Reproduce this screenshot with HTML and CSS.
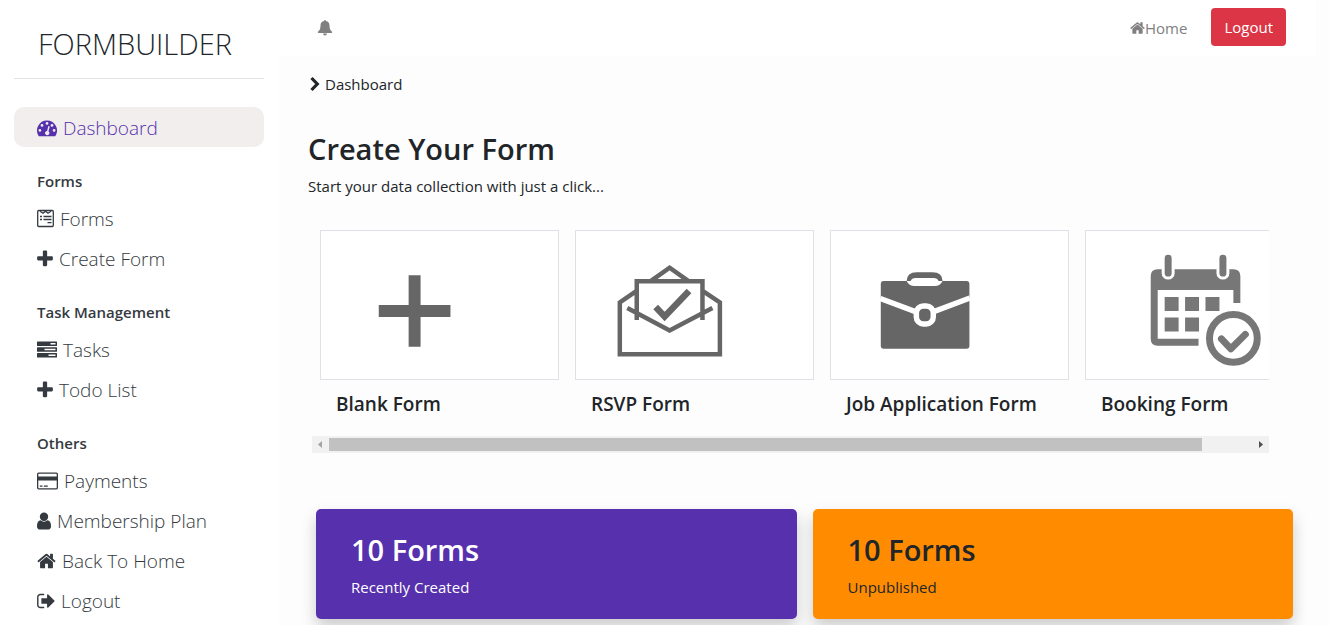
FILE: index.html
```html
<!DOCTYPE html>
<html lang="en">
<head>
<meta charset="utf-8">
<title>Formbuilder - Dashboard</title>
<link rel="stylesheet" href="styles.css">
</head>
<body>
<svg class="defs" aria-hidden="true">
  <symbol id="plus" viewBox="192 0 1408 1792"><path d="M1600 736v192q0 40-28 68t-68 28h-416v416q0 40-28 68t-68 28h-192q-40 0-68-28t-28-68v-416h-416q-40 0-68-28t-28-68v-192q0-40 28-68t68-28h416v-416q0-40 28-68t68-28h192q40 0 68 28t28 68v416h416q40 0 68 28t28 68z"/></symbol>
  <symbol id="home" viewBox="64 0 1664 1792"><path d="M1472 992v480q0 26-19 45t-45 19h-384v-384h-256v384h-384q-26 0-45-19t-19-45v-480q0-1 .5-3t.5-3l575-474 575 474q1 2 1 6zm223-69l-62 74q-8 9-21 11h-3q-13 0-21-7l-692-577-692 577q-12 8-24 7-13-2-21-11l-62-74q-8-10-7-23.500t11-21.500l719-599q32-26 76-26t76 26l244 204v-195q0-14 9-23t23-9h192q14 0 23 9t9 23v408l219 182q10 8 11 21.500t-7 23.500z"/></symbol>
</svg>
<div class="layout">
  <aside class="sidebar">
    <div class="brand">FORMBUILDER</div>
    <nav class="menu" aria-label="Main">
      <a class="item active" href="#">
        <svg class="icon w20" viewBox="0 0 20 20"><path fill-rule="evenodd" d="M10 2.500a10 10 0 0 1 8.400 15.400q-.3.400-.8.400H2.400q-.5 0-.8-.4A10 10 0 0 1 10 2.500zM2.900 11a1.400 1.400 0 1 0 0 2.800 1.400 1.400 0 0 0 0-2.800zM5 6a1.400 1.400 0 1 0 0 2.800A1.400 1.400 0 0 0 5 6zM10 4a1.400 1.400 0 1 0 0 2.800A1.400 1.400 0 0 0 10 4zM15 6a1.400 1.400 0 1 0 0 2.800A1.400 1.400 0 0 0 15 6zM17.100 11a1.400 1.400 0 1 0 0 2.800 1.400 1.400 0 0 0 0-2.800zM11.300 8.300l-1.200 4.600a2.200 2.200 0 1 0 1.400.4l1.200-4.700q-.6-1.100-1.400-.3z"/></svg>Dashboard</a>
      <h2 class="group">Forms</h2>
      <a class="item" href="#">
        <svg class="icon w17" viewBox="0 0 17 20"><g fill="none" stroke="currentColor" stroke-width="1.300"><rect x=".7" y="1.500" width="15.600" height="16" rx="1"/><path d="M3 2.200l3 2 2.500-2 2.500 2 3-2M3 7.500h2M6.500 7.500h8M3 10.500h2M6.500 10.500h8M10.500 13.700h4"/></g></svg>Forms</a>
      <a class="item" href="#"><svg class="icon w16"><use href="#plus"/></svg>Create Form</a>
      <h2 class="group">Task Management</h2>
      <a class="item" href="#">
        <svg class="icon w20" viewBox="0 0 20 20"><path fill-rule="evenodd" d="M.5 1.500h19q.5 0 .5.500v3.500q0 .5-.5.500H.5Q0 6 0 5.500V2q0-.5.500-.5zM13.500 3v1.500h5V3zM.5 7.200h19q.5 0 .5.500v3.500q0 .5-.5.500H.5q-.5 0-.5-.5V7.700q0-.5.500-.5zM7.500 8.700v1.500h11V8.700zM.5 13h19q.5 0 .5.500V17q0 .5-.5.500H.5Q0 17.500 0 17v-3.500q0-.5.500-.5zM11.500 14.500V16h7v-1.500z"/></svg>Tasks</a>
      <a class="item" href="#"><svg class="icon w16"><use href="#plus"/></svg>Todo List</a>
      <h2 class="group">Others</h2>
      <a class="item" href="#">
        <svg class="icon w21" viewBox="0 0 21 20"><path fill-rule="evenodd" d="M1.800 1.500h17.600a1.700 1.700 0 0 1 1.600 1.700v13.600a1.700 1.700 0 0 1-1.600 1.700H1.800A1.700 1.700 0 0 1 0 16.800V3.200a1.700 1.700 0 0 1 1.800-1.700zM1.300 3.300V5.500h18.400V3.300q0-.6-.6-.6H1.900q-.6 0-.6.600zM1.300 9.500v7.200q0 .6.600.6h17.200q.6 0 .6-.6V9.500zM2.800 14.500h2.700v1.300H2.800zM6.800 14.500h4v1.300h-4z"/></svg>Payments</a>
      <a class="item" href="#"><svg class="icon w14" viewBox="256 0 1280 1792"><path d="M1536 1399q0 109-62.500 187t-150.500 78h-854q-88 0-150.500-78t-62.500-187q0-85 8.500-160.500t31.500-152 58.500-131 94-89 134.500-34.500q131 128 313 128t313-128q76 0 134.500 34.500t94 89 58.500 131 31.500 152 8.500 160.500zm-256-887q0 159-112.500 271.500t-271.500 112.500-271.500-112.500-112.500-271.500 112.500-271.500 271.500-112.500 271.500 112.500 112.500 271.500z"/></svg>Membership Plan</a>
      <a class="item" href="#"><svg class="icon w19"><use href="#home"/></svg>Back To Home</a>
      <a class="item" href="#"><svg class="icon w18" viewBox="64 0 1600 1792"><path d="M704 1440q0 4 1 20t.5 26.500-3 23.500-10 19.500-20.500 6.500h-320q-119 0-203.500-84.500t-84.500-203.500v-704q0-119 84.500-203.500t203.500-84.500h320q13 0 22.500 9.500t9.500 22.500q0 4 1 20t.5 26.500-3 23.500-10 19.500-20.500 6.500h-320q-66 0-113 47t-47 113v704q0 66 47 113t113 47h312l11.500 1 11.500 3 8 5.500 7 9 2 13.500zm928-544q0 26-19 45l-544 544q-19 19-45 19t-45-19-19-45v-288h-448q-26 0-45-19t-19-45v-384q0-26 19-45t45-19h448v-288q0-26 19-45t45-19 45 19l544 544q19 19 19 45z"/></svg>Logout</a>
    </nav>
  </aside>

  <div class="main">
    <header class="topbar">
      <button class="bell" type="button" aria-label="Notifications">
        <svg viewBox="0 0 16 16"><path d="M8 0q.9 0 .9 1 3.600.6 3.600 4.600 0 4.600 2.800 6.400 0 1-1 1H1.700q-1 0-1-1 2.800-1.800 2.800-6.400Q3.500 1.600 7.100 1 7.100 0 8 0zM6 13.500h4a2 2 0 0 1-4 0z"/></svg>
      </button>
      <div class="account">
        <a class="homelink" href="#"><svg class="small-icon"><use href="#home"/></svg>Home</a>
        <button class="logout" type="button">Logout</button>
      </div>
    </header>

    <main class="content">
      <div class="crumb"><svg viewBox="0 0 12 16"><path d="M3.500 2L9.300 8l-5.800 6" fill="none" stroke="currentColor" stroke-width="3.200"/></svg>Dashboard</div>
      <h1 class="title">Create Your Form</h1>
      <p class="lead">Start your data collection with just a click...</p>

      <section class="templates">
        <div class="scroller">
          <a class="template" href="#">
            <div class="thumb"><svg viewBox="0 0 238 148"><path fill="#666" d="M88 44h12v30h30v12h-30v30H88V86H58V74h30z"/></svg></div>
            <h3>Blank Form</h3>
          </a>
          <a class="template" href="#">
            <div class="thumb"><svg viewBox="0 0 238 148"><g fill="none" stroke="#666" stroke-width="4.500"><path d="M75 50L94 36.500 113 50M61 89V50.200h66V89M60.500 60L44 71.500V123.500H144.500V71.500L127.500 60M51.500 77L94 99.500 137 77"/><path stroke-width="6.500" d="M80 76l9 9.500L113.500 60"/></g></svg></div>
            <h3>RSVP Form</h3>
          </a>
          <a class="template" href="#">
            <div class="thumb"><svg viewBox="0 0 238 148"><path fill="#666" d="M53 50h83q3 0 3 3v62q0 3-3 3H53q-3 0-3-3V53q0-3 3-3z"/><path fill="#fff" d="M76 50h36q-2 5-8 5H84q-6 0-8-5z"/><path fill="#666" d="M76 50q0-9 10-9h16q10 0 10 9h-4q-1-3-5-3H85q-4 0-5 3z"/><path d="M49.500 67.500L94 84l45.500-17" fill="none" stroke="#fff" stroke-width="5.500"/><rect x="85.700" y="75" width="17" height="18" rx="7" fill="#666" stroke="#fff" stroke-width="5.500"/></svg></div>
            <h3>Job Application Form</h3>
          </a>
          <a class="template" href="#">
            <div class="thumb"><svg viewBox="0 0 238 148"><g fill="#777"><path fill-rule="evenodd" d="M72 38h76q7 0 7 7v27h-7V59H72v49h41v7H72q-7 0-7-7V45q0-7 7-7z"/><path d="M79 66h14v14H79zM99.500 66h14v14h-14zM120 66h14v14h-14zM79 86.500h14v14H79zM99.500 86.500h14v14h-14z"/></g><g stroke-linecap="round" fill="none"><path d="M82.500 39v3M137.500 39v3" stroke="#fff" stroke-width="13"/><path d="M82.500 27v15M137.500 27v15" stroke="#777" stroke-width="7"/><circle cx="148" cy="107.500" r="24" fill="#fff" stroke="#777" stroke-width="7"/><path d="M136 108l9.500 10L160 103.500" stroke="#777" stroke-width="7" stroke-linejoin="round"/></g></svg></div>
            <h3>Booking Form</h3>
          </a>
        </div>
        <div class="scrollbar" aria-hidden="true">
          <svg viewBox="0 0 17 17"><path fill="#a3a3a3" d="M10 5v7L6 8.500z"/></svg>
          <div class="track"><div class="handle"></div></div>
          <svg viewBox="0 0 17 17"><path fill="#505050" d="M7 5v7l4-3.500z"/></svg>
        </div>
      </section>

      <section class="stats">
        <article class="stat purple"><h2>10 Forms</h2><p>Recently Created</p></article>
        <article class="stat orange"><h2>10 Forms</h2><p>Unpublished</p></article>
      </section>
    </main>
  </div>
</div>
</body>
</html>
```
FILE: styles.css
```css
* { box-sizing: border-box; }

body {
  margin: 0;
  background: #fdfdfd;
  color: #212529;
  font: 15px/24px "Open Sans", "Noto Sans", sans-serif;
}

h1, h2, h3, p { margin: 0; }
a { color: inherit; text-decoration: none; }
button { font: inherit; border: 0; cursor: pointer; }
.defs { display: none; }

.layout { display: flex; min-height: 100vh; }

/* Sidebar */
.sidebar {
  flex: 0 0 279px;
  padding: 10px 15px 4px 14px;
  background: #fff;
}
.brand {
  padding: 9px 24px;
  border-bottom: 1px solid #e2e3e5;
  font-size: 29px;
  font-weight: 300;
  line-height: 50px;
}
.menu { padding-top: 28px; color: #343a40; }
.item {
  display: flex;
  align-items: center;
  gap: 6px;
  height: 40px;
  padding: 2px 23px 0;
  border-radius: 10px;
  font-size: 19px;
  font-weight: 300;
  white-space: nowrap;
}
.active { background: #f2eeed; color: #5630ad; }
.group {
  padding: 25px 23px 7px;
  font-size: 15px;
  font-weight: 600;
  line-height: 19px;
}
.icon { height: 20px; fill: currentColor; flex: none; }
.w14 { width: 14px; }
.w16 { width: 16px; }
.w17 { width: 17px; }
.w18 { width: 18px; }
.w19 { width: 19px; }
.w20 { width: 20px; }
.w21 { width: 21px; }

/* Top bar */
.main { flex: 1; min-width: 0; }
.topbar {
  display: flex;
  align-items: center;
  justify-content: space-between;
  height: 56px;
  margin-right: 13px;
  padding: 0 30px 0 38px;
  background: #fff;
}
.bell { display: flex; padding: 0; background: none; color: #808080; }
.bell svg { width: 16px; height: 16px; fill: currentColor; }
.account { display: flex; align-items: center; gap: 24px; color: #808080; }
.homelink { display: flex; align-items: center; }
.small-icon { width: 15px; height: 16px; fill: currentColor; }
.logout {
  height: 38px;
  margin-bottom: 2px;
  padding: 0 13px;
  border-radius: 4px;
  background: #dc3545;
  color: #fff;
}

/* Content */
.content { padding: 16px 28px 32px 29px; }
.crumb { display: flex; align-items: center; gap: 5px; }
.crumb svg { width: 12px; height: 16px; }
.title {
  padding-top: 34px;
  font-size: 29px;
  font-weight: 600;
  line-height: 38px;
}
.lead { padding-top: 6px; }

.templates { margin: 32px 32px 0 4px; }
.scroller {
  display: flex;
  gap: 16px;
  padding-left: 8px;
  overflow-x: auto;
  scrollbar-width: none;
}
.template { flex: 0 0 239px; }
.thumb { border: 1px solid #dee2e6; background: #fff; }
.thumb svg { display: block; width: 100%; height: 148px; }
.template h3 {
  padding: 12px 16px 20px;
  font-size: 19px;
  font-weight: 600;
  line-height: 24px;
  white-space: nowrap;
}
.scrollbar { display: flex; height: 17px; background: #f1f1f1; }
.scrollbar svg { width: 17px; height: 17px; }
.track { flex: 1; padding: 2px 0; }
.handle { width: 94.6%; height: 13px; background: #c1c1c1; }

.stats {
  display: grid;
  grid-template-columns: 1fr 1fr;
  gap: 16px;
  padding: 56px 8px 0;
}
.stat {
  height: 110px;
  padding: 22px 35px;
  border-radius: 5px;
  box-shadow: 0 8px 16px rgba(0, 0, 0, .2);
}
.stat h2 { font-size: 29px; font-weight: 600; line-height: 38px; }
.stat p { padding-top: 6px; }
.purple { background: #5630ad; color: #fff; }
.orange { background: #ff8c00; }
```
